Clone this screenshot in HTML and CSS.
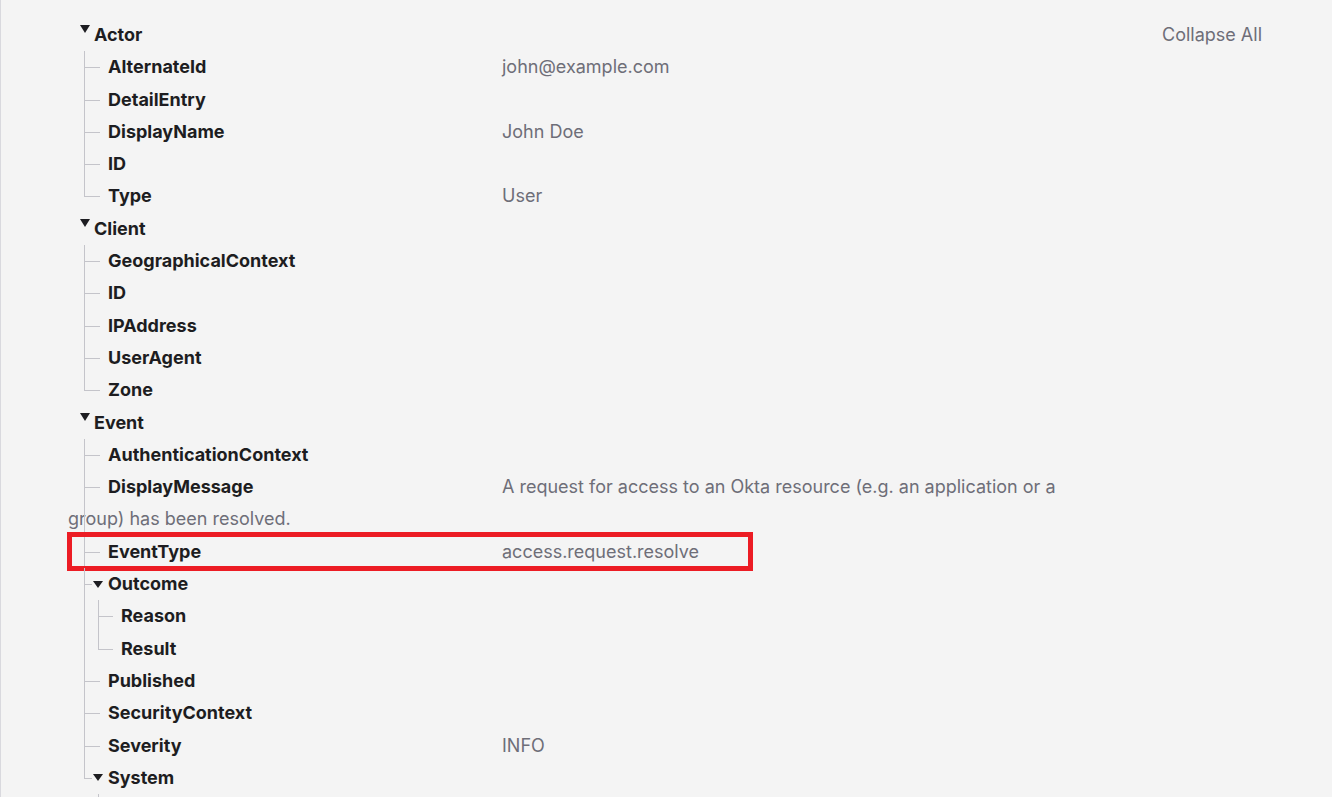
FILE: index.html
```html
<!DOCTYPE html>
<html lang="en">
<head>
  <meta charset="UTF-8">
  <meta name="viewport" content="width=device-width, initial-scale=1">
  <title>Event details</title>
  <link rel="stylesheet" href="styles.css">
</head>
<body>
  <div class="panel">
    <ul class="tree">
      <li class="group">
        <div class="node"><span class="caret"></span><span class="key">Actor</span></div>
        <ul class="children">
          <li class="leaf"><span class="key">AlternateId</span><span class="val">john@example.com</span></li>
          <li class="leaf"><span class="key">DetailEntry</span></li>
          <li class="leaf"><span class="key">DisplayName</span><span class="val">John Doe</span></li>
          <li class="leaf"><span class="key">ID</span></li>
          <li class="leaf"><span class="key">Type</span><span class="val">User</span></li>
        </ul>
      </li>
      <li class="group">
        <div class="node"><span class="caret"></span><span class="key">Client</span></div>
        <ul class="children">
          <li class="leaf"><span class="key">GeographicalContext</span></li>
          <li class="leaf"><span class="key">ID</span></li>
          <li class="leaf"><span class="key">IPAddress</span></li>
          <li class="leaf"><span class="key">UserAgent</span></li>
          <li class="leaf"><span class="key">Zone</span></li>
        </ul>
      </li>
      <li class="group">
        <div class="node"><span class="caret"></span><span class="key">Event</span></div>
        <ul class="children">
          <li class="leaf"><span class="key">AuthenticationContext</span></li>
          <li class="leaf"><span class="key">DisplayMessage</span><span class="val">A request for access to an Okta resource (e.g. an application or a group) has been resolved.</span></li>
          <li class="leaf marked"><span class="key">EventType</span><span class="val">access.request.resolve</span></li>
          <li class="sub">
            <div class="node"><span class="caret"></span><span class="key">Outcome</span></div>
            <ul class="children">
              <li class="leaf"><span class="key">Reason</span></li>
              <li class="leaf"><span class="key">Result</span></li>
            </ul>
          </li>
          <li class="leaf"><span class="key">Published</span></li>
          <li class="leaf"><span class="key">SecurityContext</span></li>
          <li class="leaf"><span class="key">Severity</span><span class="val">INFO</span></li>
          <li class="sub">
            <div class="node"><span class="caret"></span><span class="key">System</span></div>
            <ul class="children">
              <li class="leaf"><span class="key">Tenant</span></li>
            </ul>
          </li>
        </ul>
      </li>
    </ul>
    <button class="collapse-all">Collapse All</button>
  </div>
</body>
</html>
```

FILE: styles.css
```css
html, body {
  margin: 0;
  height: 100%;
  overflow: hidden;
}
body {
  background-color: #f4f4f4;
  border-left: 1px solid #d9d9de;
  font-family: Inter, "Noto Sans", sans-serif;
  font-size: 18px;
  color: #1d1d21;
}
.panel {
  display: flex;
  align-items: flex-start;
  padding: 19px 70px 0 67px;
}
ul {
  list-style: none;
  margin: 0;
  padding: 0;
}
.tree {
  flex: 0 0 1020px;
  line-height: 32.3px;
}
.key {
  font-weight: 700;
}
.val {
  color: #6e6e78;
}

/* top level groups */
.group > .node {
  display: flex;
  align-items: flex-start;
  padding-left: 12px;
}
.group > .node .caret {
  margin: 6px 4px 0 0;
  border-left: 5px solid transparent;
  border-right: 5px solid transparent;
  border-top: 8px solid #1d1d21;
}

/* rows with a branch line */
.children > li {
  position: relative;
}
.children > li::before {
  content: "";
  position: absolute;
  left: 16px;
  top: 0;
  bottom: 0;
  border-left: 1px solid #c4c4ca;
}
.children > li:last-child::before {
  bottom: auto;
  height: 16px;
}
.children > li::after {
  content: "";
  position: absolute;
  left: 16px;
  top: 16px;
  width: 16px;
  border-top: 1px solid #c4c4ca;
}
.leaf .key {
  display: inline-block;
  margin-left: 40px;
  width: 394px;
}

/* nested groups */
.sub > .node {
  display: flex;
  align-items: center;
  height: 32.3px;
  padding-left: 25px;
}
.sub::after {
  width: 8px !important;
}
.sub > .node .caret {
  margin-right: 5px;
  border-left: 5px solid transparent;
  border-right: 5px solid transparent;
  border-top: 7px solid #1d1d21;
}
.sub .children > li::before,
.sub .children > li::after {
  left: 30px;
}
.sub .children > li::after {
  width: 15px;
}
.sub .leaf .key {
  margin-left: 53px;
  width: 381px;
}

/* highlight box */
.marked .key::after {
  content: "";
  position: absolute;
  left: -1px;
  top: -4px;
  width: 686px;
  height: 39px;
  box-sizing: border-box;
  border: 5px solid #ec1c24;
}

.collapse-all {
  margin-left: auto;
  background: none;
  border: none;
  padding: 0;
  font-family: inherit;
  font-size: 18px;
  line-height: 32.3px;
  color: #6e6e78;
  cursor: pointer;
}
```
